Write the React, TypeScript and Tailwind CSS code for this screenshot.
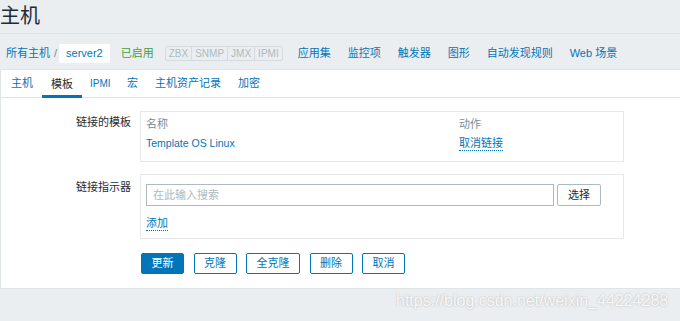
import React from "react";

const font = "font-['Liberation_Sans','Noto_Sans_CJK_SC',sans-serif]";

function NavLink({ children, className = "" }: { children: React.ReactNode; className?: string }) {
  return <span className={`text-[#0275b8] text-[11px] leading-[19px] ${className}`}>{children}</span>;
}

function Btn({ children, primary = false }: { children: React.ReactNode; primary?: boolean }) {
  return (
    <button
      className={`h-[21px] px-[9.5px] rounded-[2px] border text-[11px] leading-[19px] ${
        primary ? "bg-[#0275b8] border-[#0275b8] text-white" : "bg-white border-[#0275b8] text-[#0275b8]"
      }`}
    >
      {children}
    </button>
  );
}

export default function App() {
  return (
    <div className={`relative w-full h-[321px] bg-[#ebeef0] overflow-hidden ${font} text-[#1f2c33]`}>
      {/* Title */}
      <div className="h-[34px] border-b border-[#dfe4e7] flex items-center">
        <h1 className="text-[20px] leading-[24px] text-[#1f2c33] pl-0 mt-[-1px]">主机</h1>
      </div>

      {/* Nav */}
      <div className="h-[36px] border-b border-[#dfe4e7] pt-[10px]">
        <div className="flex items-center h-[19px]">
          <NavLink className="ml-[6px]">所有主机</NavLink>
          <span className="ml-[4px] text-[#768d99] text-[11px] leading-[19px]">/</span>
          <span className="ml-[2px] h-[19px] px-[7px] bg-white rounded-[2px] text-[#0275b8] text-[11px] leading-[19px]">
            server2
          </span>
          <span className="ml-[11px] text-[#429e47] text-[11px] leading-[19px]">已启用</span>
          <div className="ml-[11px] flex h-[15px] border border-[#d5dbdf] rounded-[2px] text-[10px] leading-[13px] text-[#acbbc2]">
            <span className="px-[3px]">ZBX</span>
            <span className="px-[3px] border-l border-[#d5dbdf]">SNMP</span>
            <span className="px-[3px] border-l border-[#d5dbdf]">JMX</span>
            <span className="px-[3px] border-l border-[#d5dbdf]">IPMI</span>
          </div>
          <NavLink className="ml-[15px]">应用集</NavLink>
          <NavLink className="ml-[17px]">监控项</NavLink>
          <NavLink className="ml-[17px]">触发器</NavLink>
          <NavLink className="ml-[17px]">图形</NavLink>
          <NavLink className="ml-[17px]">自动发现规则</NavLink>
          <NavLink className="ml-[17px]">Web 场景</NavLink>
        </div>
      </div>

      {/* Content */}
      <div className="bg-white border-l border-b border-[#dfe4e7] h-[219px]">
        {/* Tabs */}
        <div className="flex h-[28px] border-b border-[#dfe4e7] pl-[1px]">
          <span className="px-[9px] h-[27px] flex items-center text-[11px] text-[#0275b8]">主机</span>
          <span className="px-[9px] h-[28px] mb-[-1px] flex items-center text-[11px] text-[#1f2c33] border-b-[3px] border-[#0275b8] pt-[3px]">
            模板
          </span>
          <span className="px-[8px] h-[27px] flex items-center text-[10px] text-[#0275b8]">IPMI</span>
          <span className="px-[8.5px] h-[27px] flex items-center text-[11px] text-[#0275b8]">宏</span>
          <span className="px-[8.5px] h-[27px] flex items-center text-[11px] text-[#0275b8]">主机资产记录</span>
          <span className="px-[8.5px] h-[27px] flex items-center text-[11px] text-[#0275b8]">加密</span>
        </div>

        {/* Form */}
        <div className="pt-[13px] flex flex-col text-[11px]">
          {/* Row 1 */}
          <div className="flex">
            <div className="w-[130px] text-right pt-[3px] leading-[16px]">链接的模板</div>
            <div className="ml-[9px] w-[484px] border border-[#e6e9eb] pt-[4px] pb-[8px] px-[5px]">
              <div className="grid grid-cols-[313px_1fr]">
                <div className="h-[17px] leading-[17px] text-[#768d99]">名称</div>
                <div className="h-[17px] leading-[17px] text-[#768d99]">动作</div>
                <div className="h-[20px] leading-[20px] text-[10.5px] text-[#0275b8]">Template OS Linux</div>
                <div className="h-[20px] flex items-center">
                  <span className="text-[#0275b8] leading-[14px] border-b border-dotted border-[#0275b8]">取消链接</span>
                </div>
              </div>
            </div>
          </div>

          {/* Row 2 */}
          <div className="flex mt-[12px]">
            <div className="w-[130px] text-right pt-[5px] leading-[16px]">链接指示器</div>
            <div className="ml-[9px] w-[484px] border border-[#e6e9eb] pt-[9px] pb-[5px] px-[5px]">
              <div className="flex items-center">
                <input
                  className="w-[408px] h-[22px] border border-[#acbbc2] px-[6px] text-[11px] outline-none placeholder:text-[#acbbc2]"
                  placeholder="在此输入搜索"
                />
                <button className="ml-[3px] h-[22px] px-[10px] border border-[#acbbc2] rounded-[2px] bg-white text-[#1f2c33] text-[11px]">
                  选择
                </button>
              </div>
              <div className="mt-[7px] h-[20px] flex items-center">
                <span className="text-[#0275b8] leading-[14px] border-b border-dotted border-[#0275b8]">添加</span>
              </div>
            </div>
          </div>

          {/* Buttons */}
          <div className="flex gap-[9.5px] ml-[140px] mt-[14px]">
            <Btn primary>更新</Btn>
            <Btn>克隆</Btn>
            <Btn>全克隆</Btn>
            <Btn>删除</Btn>
            <Btn>取消</Btn>
          </div>
        </div>
      </div>

      {/* Watermark */}
      <div className="absolute left-[396px] top-[291px] text-[16px] leading-[20px] text-[#f7f7f7] font-['Liberation_Sans',sans-serif] [text-shadow:0_0_2px_rgba(0,0,0,0.25)]">
        https://blog.csdn.net/weixin_44224288
      </div>
    </div>
  );
}
